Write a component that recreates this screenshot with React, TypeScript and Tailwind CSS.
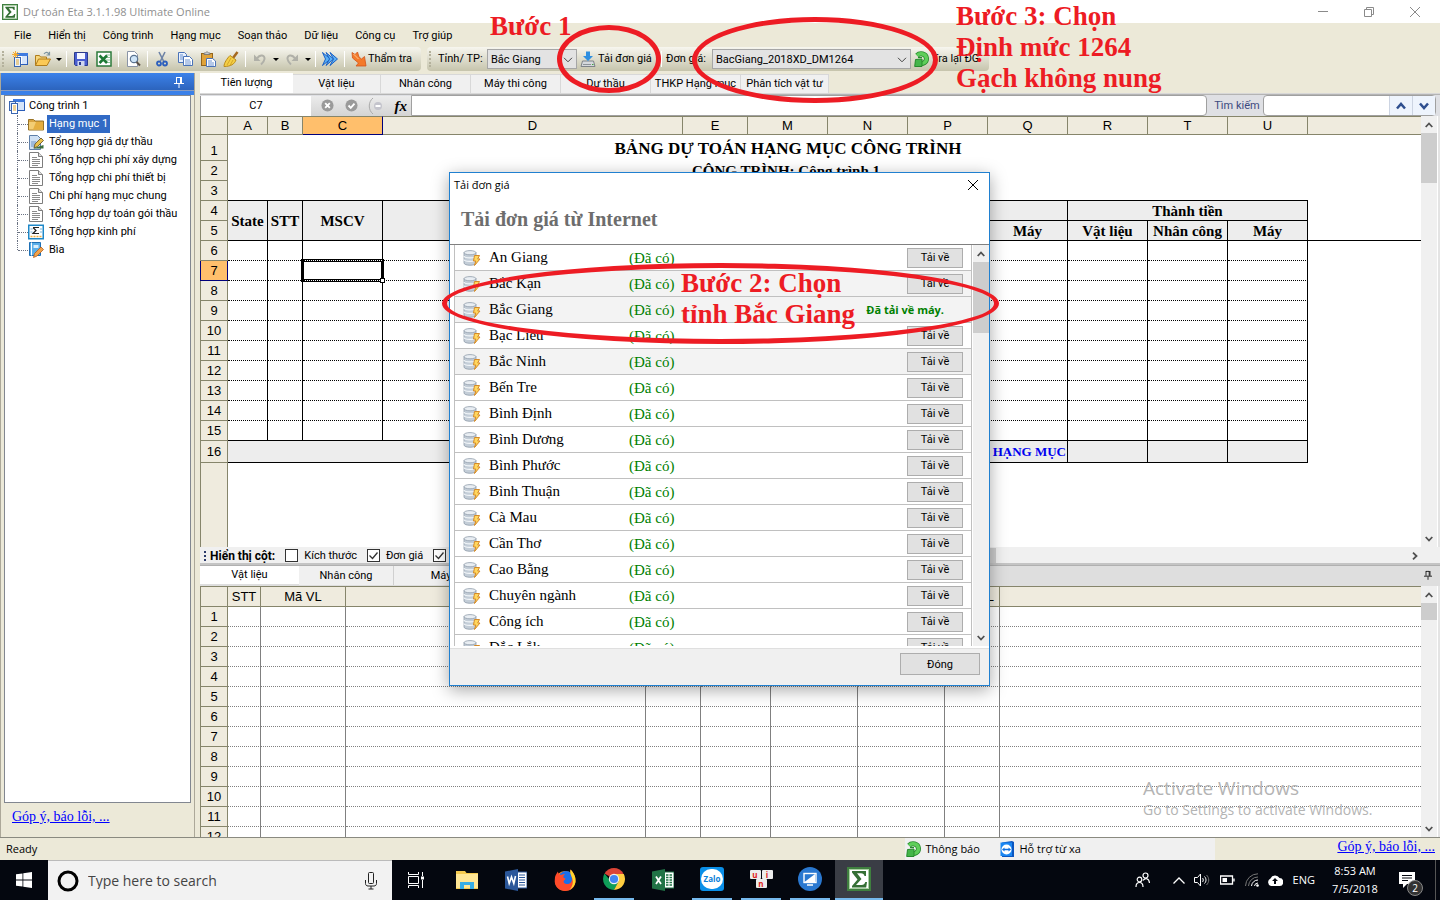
import React, { ReactNode } from "react";

const provinces = [
  { name: "An Giang" },
  { name: "Bắc Kạn", shaded: true },
  { name: "Bắc Giang", shaded: true, done: true },
  { name: "Bạc Liêu" },
  { name: "Bắc Ninh", shaded: true },
  { name: "Bến Tre" },
  { name: "Bình Định" },
  { name: "Bình Dương" },
  { name: "Bình Phước" },
  { name: "Bình Thuận" },
  { name: "Cà Mau" },
  { name: "Cần Thơ" },
  { name: "Cao Bằng" },
  { name: "Chuyên ngành" },
  { name: "Công ích" },
  { name: "Đắc Lắk" },
];

const menus = [
  "File",
  "Hiển thị",
  "Công trình",
  "Hạng mục",
  "Soạn thảo",
  "Dữ liệu",
  "Công cụ",
  "Trợ giúp",
];

const tabs = [
  { label: "Vật liệu", width: "w-[88px]" },
  { label: "Nhân công", width: "w-[90px]" },
  { label: "Máy thi công", width: "w-[90px]" },
  { label: "Dự thầu", width: "w-[90px]" },
  { label: "THKP Hạng mục", width: "w-[90px]" },
  { label: "Phân tích vật tư", width: "w-[88px]" },
];

const bodyRows = [6, 7, 8, 9, 10, 11, 12, 13, 14, 15];
const bodyCols = ["A", "B", "C", "D", "E", "M", "N", "P", "Q", "R", "T", "U"];
const detailRows = [1, 2, 3, 4, 5, 6, 7, 8, 9, 10, 11, 12];

/* ---------- icons ---------- */

const SigmaIcon = ({ className }: { className: string }) => (
  <svg viewBox="0 0 24 24" className={className}>
    <rect x="1" y="1" width="22" height="22" fill="#fff" stroke="#3f7f3f" strokeWidth="2" />
    <rect x="2.500" y="2.500" width="19" height="19" fill="none" stroke="#a9cfa2" />
    <path d="M5 4h14v5h-1.500c-.5-2-1.500-2.800-3.500-2.800h-4L14.500 12 9 18h5.500c2.200 0 3.200-1 3.800-3H20l-.8 5.500H5V19l5.500-6.500L5 5.500z" fill="#356f35" />
  </svg>
);

const NewIcon = () => (
  <svg viewBox="0 0 16 16" className="size-4">
    <rect x="5.500" y="2.500" width="10" height="11" fill="#fff" stroke="#2a5db8" />
    <path d="M5 2h11v3H5z" fill="#3f7be0" />
    <path d="M10 5v8h5V5z" fill="#d6e5fb" />
    <rect x="2.500" y="6.500" width="6" height="9" fill="#eaf2ff" stroke="#3a66b0" />
    <path d="M4 9h3M4 11h3M4 13h3" stroke="#e2a92f" />
    <path d="M3.500 0v7M0 3.500h7M1 1l5 5M6 1L1 6" stroke="#f5a623" strokeWidth=".9" />
  </svg>
);

const ProjectIcon = () => (
  <svg viewBox="0 0 16 16" className="size-4">
    <rect x="4.500" y="1.500" width="11" height="11" fill="#fff" stroke="#2a5db8" />
    <path d="M4 1h12v3H4z" fill="#3f7be0" />
    <path d="M9 4v8h6V4z" fill="#d6e5fb" />
    <rect x=".5" y="3.500" width="6" height="9" fill="#dbe8fb" stroke="#3a66b0" />
    <rect x="2.500" y="5.500" width="6" height="10" fill="#fff" stroke="#3a66b0" />
    <path d="M4 8h3M4 10h3M4 12h3" stroke="#e2a92f" />
  </svg>
);

const OpenIcon = () => (
  <svg viewBox="0 0 16 16" className="size-4">
    <path d="M.5 14.500V4.500h4l1 1.500h6v2" fill="#f7d77c" stroke="#b07d1c" />
    <path d="M.5 14.500l3-6.500h12l-3.500 6.500z" fill="#fbc956" stroke="#b07d1c" />
    <path d="M9 3c2-2.500 4-2 5 .5M14.500.8V4h-3" fill="none" stroke="#7b93a0" strokeWidth="1.200" />
  </svg>
);

const SaveIcon = () => (
  <svg viewBox="0 0 16 16" className="size-4">
    <path d="M1.500 1.500h13v13h-12l-1-1z" fill="#4a5fd0" stroke="#2b3a8c" />
    <rect x="4" y="2" width="8" height="6" fill="#f4f6ff" />
    <rect x="4.500" y="10" width="7" height="5" fill="#cfd6ee" />
    <rect x="6" y="11" width="2" height="3" fill="#2b3a8c" />
  </svg>
);

const SheetIcon = () => (
  <svg viewBox="0 0 16 16" className="size-4">
    <rect x="1" y="1" width="14" height="14" fill="#fff" stroke="#2b7a3a" strokeWidth="1.500" />
    <path d="M10 4h4M10 6.500h4M10 9h4M10 11.500h4" stroke="#8cc497" />
    <path d="M3.500 4.500l7.500 7.500M11 4.500L3.500 12" stroke="#1d7a35" strokeWidth="2.600" />
  </svg>
);

const PreviewIcon = () => (
  <svg viewBox="0 0 16 16" className="size-4">
    <path d="M2.500.5h7l3 3v12h-10z" fill="#fff" stroke="#8a94a6" />
    <circle cx="9" cy="8" r="3.700" fill="#cfe5f8" stroke="#5b7390" strokeWidth="1.200" />
    <path d="M11.500 11l3.500 3.500" stroke="#5a5048" strokeWidth="2" />
  </svg>
);

const CutIcon = () => (
  <svg viewBox="0 0 16 16" className="size-4">
    <path d="M5 1l4.500 9M11 1L6.500 10" stroke="#6d83a6" strokeWidth="1.600" />
    <circle cx="5" cy="12.500" r="2" fill="none" stroke="#2c5fbd" strokeWidth="1.800" />
    <circle cx="11" cy="12.500" r="2" fill="none" stroke="#2c5fbd" strokeWidth="1.800" />
  </svg>
);

const CopyIcon = () => (
  <svg viewBox="0 0 16 16" className="size-4">
    <path d="M1.500 1.500h6l2 2v8h-8z" fill="#e9f1fd" stroke="#4a73b8" />
    <path d="M6.500 5.500h6l3 3v6h-9z" fill="#fff" stroke="#4a73b8" />
    <path d="M3 4h3M3 6h3M3 8h3M8 9h5M8 11h6M8 13h6" stroke="#6d93d2" />
  </svg>
);

const PasteIcon = () => (
  <svg viewBox="0 0 16 16" className="size-4">
    <rect x="1.500" y="2.500" width="11" height="12" fill="#e0a33a" stroke="#94651a" />
    <path d="M4 3.500h6V2H8.500L7 .5 5.500 2H4z" fill="#c8ccd2" stroke="#6e6e6e" strokeWidth=".8" />
    <path d="M6.500 7.500h6l3 2.500v5.500h-9z" fill="#fff" stroke="#4a73b8" />
    <path d="M8 10h4M8 12h6M8 14h6" stroke="#6d93d2" />
  </svg>
);

const BroomIcon = () => (
  <svg viewBox="0 0 16 16" className="size-4">
    <path d="M14.500 1L10 7" stroke="#a5681e" strokeWidth="2.500" />
    <path d="M7 4.500l6 4.500C11.500 13 8 15.500 1 15.500 1 12 4 7.500 7 4.500z" fill="#f5cf45" stroke="#b98a1a" />
    <path d="M8 7l-4 7M10 9l-3 5.500" stroke="#c99a22" strokeWidth=".8" />
  </svg>
);

const UndoIcon = ({ flip }: { flip?: boolean }) => (
  <svg viewBox="0 0 16 16" className={flip ? "size-4 -scale-x-100" : "size-4"}>
    <path d="M5 7.500C8 3 13 4 12.500 8c-.3 2.500-2 4-3.500 5.500" fill="none" stroke="#b0b0a8" strokeWidth="2" />
    <path d="M2 3.500v6.500h6.500z" fill="#b0b0a8" />
  </svg>
);

const ForwardIcon = () => (
  <svg viewBox="0 0 18 16" className="h-4 w-[18px]">
    <path d="M1.500 1.500L9.500 8l-8 6.500L4.500 8z" fill="#5ab0f5" stroke="#1a5fc4" />
    <path d="M5 1.500L12.500 8 5 14.500 8.500 8z" fill="#5ab0f5" stroke="#1a5fc4" />
    <path d="M9 1.500L16.500 8 9 14.500 12.500 8z" fill="#5ab0f5" stroke="#1a5fc4" />
  </svg>
);

const CheckArrowIcon = () => (
  <svg viewBox="0 0 16 16" className="size-4">
    <path d="M1 1.500l3 2L6.500 1l1.500 5 2.500 2 3-2.500 1.500 9.500H5L7.500 12 1.500 7z" fill="#f47a2a" stroke="#d2541a" strokeWidth=".8" />
    <path d="M2.500 3l5 5" stroke="#ffc48a" />
  </svg>
);

const DownloadIcon = () => (
  <svg viewBox="0 0 16 16" className="size-4">
    <path d="M2.500 10h11l1.500 5.500H1z" fill="#d5d8dc" stroke="#7d8288" />
    <path d="M6 .5h4V5h3L8 10 3 5h3z" fill="#2f8fe0" />
    <path d="M3 13.500h8" stroke="#8d9298" />
    <path d="M12 13.500h1.500" stroke="#3aa53a" />
  </svg>
);

const RefreshIcon = () => (
  <svg viewBox="0 0 16 16" className="size-4">
    <path d="M3 4.500C6 1.500 12 2.500 12.500 7.500c0 4-3.500 5.500-6.500 4.800" fill="none" stroke="#268a2c" strokeWidth="5" />
    <path d="M3 4.500C6 1.500 12 2.500 12.500 7.500c0 4-3.500 5.500-6.500 4.800" fill="none" stroke="#5fce5a" strokeWidth="3.400" />
    <path d="M8 8L1.500 8.500l-.8 7H8z" fill="#44b549" stroke="#268a2c" />
    <path d="M4 6.500h4" stroke="#268a2c" strokeWidth="1.200" />
  </svg>
);

const RemoteIcon = () => (
  <svg viewBox="0 0 16 16" className="size-4">
    <path d="M3 1.500L13 0l2 1v15H3z" fill="#0a55c0" />
    <path d="M1.500 1.500H13V15H1.500z" fill="#1a86f2" />
    <circle cx="7.500" cy="8.500" r="5" fill="#fff" />
    <path d="M3 8.500l2.500-2v1.200h4V6.500l2.500 2-2.500 2V9.300h-4v1.200z" fill="#0f6fe0" />
  </svg>
);

const PinIcon = ({ className }: { className: string }) => (
  <svg viewBox="0 0 10 12" className={className} fill="none" stroke="currentColor">
    <path d="M2.500 1v6M2.500 1.500h4M6.500 1v6M7.500 1v6M0 7.500h10M5 8v4" />
  </svg>
);

const FolderIcon = () => (
  <svg viewBox="0 0 16 16" className="size-4">
    <path d="M.5 3.500h5l1.500 1.500h8.500v9H.5z" fill="#d9a441" stroke="#9a7426" />
    <path d="M1 6h14v7.500H1z" fill="#f3cd74" />
    <path d="M8 6h7v7.500H5z" fill="#e5ae3f" />
  </svg>
);

const PageIcon = () => (
  <svg viewBox="0 0 16 16" className="size-4">
    <path d="M1.500.5h9l4 4v11h-13z" fill="#fff" stroke="#7d7d7d" />
    <path d="M10.500.5v4h4" fill="#ddd" stroke="#7d7d7d" />
    <path d="M4 5.500h5M4 7.500h8M4 9.500h8M4 11.500h8M4 13.500h6" stroke="#8a8a8a" />
  </svg>
);

const BidIcon = () => (
  <svg viewBox="0 0 16 16" className="size-4">
    <path d="M1.500 1.500h8l3 3v11h-11z" fill="#cfe0f4" stroke="#5f7fa8" />
    <path d="M3 8h5M3 10h4M3 12h4" stroke="#6d93c2" />
    <path d="M6 14l1-4 6-6 2.500 2.500-6 6z" fill="#e9c14c" stroke="#5c4a22" strokeWidth=".8" />
    <path d="M5 14.500h10.500v-3.500z" fill="#3c6e3c" />
  </svg>
);

const CostIcon = () => (
  <svg viewBox="0 0 16 16" className="size-4">
    <rect x=".75" y="1.250" width="14.500" height="13.500" fill="#fff" stroke="#1e88c8" strokeWidth="1.500" />
    <path d="M5 3.500h6M5 3.500L8 6.500 5 9.500h6" fill="none" stroke="#222" strokeWidth="1.200" />
    <path d="M2.500 5h2M12 5h2M2.500 8h2M12 8h2" stroke="#7ab5dc" />
    <path d="M2.500 12.500h11" stroke="#f0b040" strokeWidth="1.500" strokeDasharray="2 1" />
  </svg>
);

const CoverIcon = () => (
  <svg viewBox="0 0 16 16" className="size-4">
    <path d="M1.500.5h11v13h-11z" fill="#5aaee8" stroke="#1e6fb4" />
    <path d="M3.500.5v13" stroke="#fff" />
    <path d="M5.500 3h5v3h-5z" fill="#d8eefc" />
    <path d="M5.500 15.500l1-4L13 5l2.500 2.500-6.500 6.500z" fill="#f2a24a" stroke="#b4601e" strokeWidth=".8" />
  </svg>
);

const DatabaseIcon = () => (
  <svg viewBox="0 0 18 16" className="h-4 w-[18px]">
    <path d="M1 2.500v10.500c0 3 12 3 12 0V2.500z" fill="#c3cdd7" stroke="#8f9ca9" strokeWidth=".8" />
    <ellipse cx="7" cy="2.700" rx="6" ry="2.100" fill="#e9eef3" stroke="#8f9ca9" strokeWidth=".8" />
    <path d="M1 6c0 2.500 12 2.500 12 0M1 9.500c0 2.500 12 2.500 12 0" fill="none" stroke="#f4f7fa" strokeWidth="1.200" />
    <path d="M11.500 5.500h5l-1.800 3.500h2.300l-5.500 6.500 1.300-4.500h-2.300z" fill="#ffd75e" stroke="#d68a26" strokeWidth="1" />
  </svg>
);

const Chevron = ({ className }: { className: string }) => (
  <svg viewBox="0 0 10 6" className={className} fill="none" stroke="currentColor">
    <path d="M1 .8l4 4 4-4" />
  </svg>
);

const CloseIcon = ({ className }: { className: string }) => (
  <svg viewBox="0 0 12 12" className={className} stroke="currentColor">
    <path d="M1 1l10 10M11 1L1 11" />
  </svg>
);

/* ---------- small parts ---------- */

const ToolButton = ({ label, children }: { label: string; children: ReactNode }) => (
  <button aria-label={label} className="flex h-5 w-[23px] shrink-0 items-center justify-center">
    {children}
  </button>
);

const Caret = () => (
  <button aria-label="Thêm" className="flex h-5 w-[9px] shrink-0 items-center justify-center">
    <svg viewBox="0 0 6 3" className="h-[3px] w-1.5">
      <path d="M0 0h6L3 3z" />
    </svg>
  </button>
);

const Separator = () => (
  <div className="flex w-1.5 shrink-0 justify-center">
    <div className="h-4 w-px bg-white" />
  </div>
);

const Grip = () => (
  <div className="mx-0.5 h-4 w-1 shrink-0 border-l-2 border-dotted border-[#b4b19c]" />
);

const ScrollArrow = ({ label, dir }: { label: string; dir: "up" | "down" }) => (
  <button
    aria-label={label}
    className="flex h-[17px] shrink-0 items-center justify-center text-[#505050]"
  >
    <svg
      viewBox="0 0 8 6"
      className={dir === "up" ? "h-1.5 w-2" : "h-1.5 w-2 rotate-180"}
      fill="none"
      stroke="currentColor"
      strokeWidth="1.800"
    >
      <path d="M.7 5L4 1.500 7.300 5" />
    </svg>
  </button>
);

const Scrollbar = ({ thumb }: { thumb: string }) => (
  <div className="flex w-4 shrink-0 flex-col bg-[#f0f0f0]">
    <ScrollArrow label="Cuộn lên" dir="up" />
    <div className={"w-full bg-[#cdcdcd] " + thumb} />
    <div className="flex-1" />
    <ScrollArrow label="Cuộn xuống" dir="down" />
  </div>
);

const ColumnCheck = ({ id, label, checked }: { id: string; label?: string; checked?: boolean }) => (
  <div className="flex shrink-0 items-center gap-1.5">
    <span className="relative flex size-[13px]">
      <input
        id={id}
        type="checkbox"
        aria-label={label ? undefined : id}
        defaultChecked={checked}
        className="peer size-[13px] appearance-none border border-[#333] bg-white"
      />
      <svg
        viewBox="0 0 13 13"
        className="pointer-events-none absolute inset-0 hidden peer-checked:block"
        fill="none"
        stroke="#333"
        strokeWidth="1.300"
      >
        <path d="M2.500 6.500l3 3 5-6" />
      </svg>
    </span>
    {label && <label htmlFor={id}>{label}</label>}
  </div>
);

/* ---------- window top ---------- */

const TitleBar = () => (
  <header className="flex h-[23px] shrink-0 items-center bg-white pl-0.5">
    <SigmaIcon className="size-4" />
    <h1 className="ml-[5px] font-['Open_Sans',sans-serif] text-[11px] text-[#8f8f8f]">
      Dự toán Eta 3.1.1.98 Ultimate Online
    </h1>
    <div className="ml-auto flex pr-0.5 text-[#8a8a8a]">
      <button aria-label="Thu nhỏ" className="flex h-5 w-[46px] items-center justify-center">
        <span className="h-px w-2.5 bg-current" />
      </button>
      <button aria-label="Khôi phục" className="flex h-5 w-[46px] items-center justify-center">
        <svg viewBox="0 0 10 10" className="size-2.5" fill="none" stroke="currentColor">
          <path d="M.5 2.500h7v7h-7zM2.500 2.500v-2h7v7h-2" />
        </svg>
      </button>
      <button aria-label="Đóng cửa sổ" className="flex h-5 w-[46px] items-center justify-center">
        <CloseIcon className="size-3" />
      </button>
    </div>
  </header>
);

const Toolbar = () => (
  <div className="flex h-[25px] shrink-0 gap-1.5">
    <div className="flex h-6 w-[421px] items-center rounded-r bg-linear-to-b from-[#f7f6ef] to-[#c6c4ac]">
      <Grip />
      <ToolButton label="Tạo mới"><NewIcon /></ToolButton>
      <ToolButton label="Mở"><OpenIcon /></ToolButton>
      <Caret />
      <Separator />
      <ToolButton label="Lưu"><SaveIcon /></ToolButton>
      <ToolButton label="Xuất Excel"><SheetIcon /></ToolButton>
      <Separator />
      <ToolButton label="Xem trước"><PreviewIcon /></ToolButton>
      <Separator />
      <ToolButton label="Cắt"><CutIcon /></ToolButton>
      <ToolButton label="Sao chép"><CopyIcon /></ToolButton>
      <ToolButton label="Dán"><PasteIcon /></ToolButton>
      <ToolButton label="Xóa định dạng"><BroomIcon /></ToolButton>
      <Separator />
      <ToolButton label="Hoàn tác"><UndoIcon /></ToolButton>
      <Caret />
      <ToolButton label="Làm lại"><UndoIcon flip /></ToolButton>
      <Caret />
      <Separator />
      <ToolButton label="Tiếp"><ForwardIcon /></ToolButton>
      <Separator />
      <button className="ml-1 flex shrink-0 items-center gap-px">
        <CheckArrowIcon />
        Thẩm tra
      </button>
    </div>
    <div className="flex h-6 w-[562px] items-center rounded bg-linear-to-b from-[#f7f6ef] to-[#c6c4ac]">
      <Grip />
      <label htmlFor="province" className="w-[52px] shrink-0 pl-[3px] whitespace-nowrap">
        Tỉnh/ TP:
      </label>
      <div className="relative shrink-0">
        <select
          id="province"
          className="h-5 w-[90px] appearance-none border border-[#a6a6a6] bg-[#e3e3e3] pt-0.5 pl-[3px]"
        >
          <option>Bắc Giang</option>
        </select>
        <Chevron className="pointer-events-none absolute top-2 right-1 h-1.5 w-2.5 text-[#444]" />
      </div>
      <button className="ml-[3px] flex w-[78px] shrink-0 items-center gap-0.5 whitespace-nowrap">
        <DownloadIcon />
        Tải đơn giá
      </button>
      <Separator />
      <label htmlFor="price" className="w-[48px] shrink-0 pl-0.5 whitespace-nowrap">
        Đơn giá:
      </label>
      <div className="relative shrink-0">
        <select
          id="price"
          className="h-5 w-[199px] appearance-none border border-[#a6a6a6] bg-[#e3e3e3] pt-0.5 pl-[3px]"
        >
          <option>BacGiang_2018XD_DM1264</option>
        </select>
        <Chevron className="pointer-events-none absolute top-2 right-1 h-1.5 w-2.5 text-[#444]" />
      </div>
      <button className="ml-[3px] flex shrink-0 items-center gap-0.5 whitespace-nowrap">
        <RefreshIcon />
        Tra lại ĐG
      </button>
    </div>
  </div>
);

/* ---------- left side ---------- */

const treeItems = [
  { label: "Hạng mục 1", icon: <FolderIcon />, selected: true },
  { label: "Tổng hợp giá dự thầu", icon: <BidIcon /> },
  { label: "Tổng hợp chi phí xây dựng", icon: <PageIcon /> },
  { label: "Tổng hợp chi phí thiết bị", icon: <PageIcon /> },
  { label: "Chi phí hạng mục chung", icon: <PageIcon /> },
  { label: "Tổng hợp dự toán gói thầu", icon: <PageIcon /> },
  { label: "Tổng hợp kinh phí", icon: <CostIcon /> },
  { label: "Bìa", icon: <CoverIcon /> },
];

const Sidebar = () => (
  <aside className="flex w-[195px] shrink-0 flex-col border-x border-[#aca899]">
    <div className="flex h-[18px] shrink-0 items-center justify-end border-b border-[#8a9cc0] bg-linear-to-b from-[#3c82ea] to-[#2c64bd] pr-2.5 text-white">
      <PinIcon className="h-3 w-2.5" />
    </div>
    <div className="h-1 shrink-0 bg-[#3a80e8]" />
    <div className="mx-[3px] flex-1 border border-[#828790] bg-white pt-px pl-1">
      <div className="flex h-[18px] items-center gap-1">
        <ProjectIcon />
        Công trình 1
      </div>
      <ul className="ml-2">
        {treeItems.map((item, i) => (
          <li key={item.label} className="flex h-[18px] items-center">
            <span
              className={
                i === treeItems.length - 1
                  ? "h-[9px] self-start border-l border-dotted border-gray-500"
                  : "h-[18px] border-l border-dotted border-gray-500"
              }
            />
            <span className="w-2.5 border-t border-dotted border-gray-500" />
            {item.icon}
            <span
              className={
                item.selected
                  ? "ml-[3px] bg-[#316ac5] px-0.5 leading-[18px] text-white"
                  : "ml-[3px] px-0.5 leading-[18px]"
              }
            >
              {item.label}
            </span>
          </li>
        ))}
      </ul>
    </div>
    <div className="h-[34px] shrink-0 pt-1.5 pl-[11px]">
      <a href="#feedback" className="font-['Liberation_Serif',serif] text-[14px] text-[#0000ff] underline">
        Góp ý, báo lỗi, ...
      </a>
    </div>
  </aside>
);

/* ---------- estimate sheet ---------- */

const rowHead =
  "border-x border-b border-[#86856b] bg-[#efebde] p-0 text-center font-['Liberation_Sans',sans-serif] text-[13px] font-normal";
const activeHead = "border-[#00007b] bg-[#ffbf6c]";
const groupHead = "border-r border-b border-black bg-[#ededed] p-0 text-[15px]";

const EstimateSheet = () => (
  <table className="w-full table-fixed border-separate border-spacing-0 leading-4">
    <colgroup>
      <col className="w-[28px]" />
      <col className="w-[40px]" />
      <col className="w-[35px]" />
      <col className="w-[80px]" />
      <col className="w-[300px]" />
      <col className="w-[65px]" />
      <col className="w-[80px]" />
      <col className="w-[80px]" />
      <col className="w-[80px]" />
      <col className="w-[80px]" />
      <col className="w-[80px]" />
      <col className="w-[80px]" />
      <col className="w-[80px]" />
      <col />
    </colgroup>
    <thead>
      <tr className="h-[19px] font-['Liberation_Sans',sans-serif] text-[13px]">
        <th className="border border-[#86856b] bg-[#efebde] p-0" />
        {bodyCols.map((col) => (
          <th
            key={col}
            className={
              "border-t border-r border-b p-0 font-normal " +
              (col === "C" ? activeHead + " border-t-[#86856b]" : "border-[#86856b] bg-[#efebde]")
            }
          >
            {col}
          </th>
        ))}
        <th className="border-y border-[#86856b] bg-[#efebde] p-0" />
      </tr>
    </thead>
    <tbody className="font-['Liberation_Serif',serif]">
      <tr className="h-[26px]">
        <th className={rowHead + " pt-1.5"}>1</th>
        <td colSpan={12} className="p-0 pt-0.5 pl-10 text-center text-[17px] font-bold">
          BẢNG DỰ TOÁN HẠNG MỤC CÔNG TRÌNH
        </td>
        <td />
      </tr>
      <tr className="h-5">
        <th className={rowHead}>2</th>
        <td colSpan={12} className="p-0 pl-9 text-center text-[15px] font-bold">
          CÔNG TRÌNH: Công trình 1
        </td>
        <td />
      </tr>
      <tr className="h-5">
        <th className={rowHead}>3</th>
        <td colSpan={12} className="border-b border-black p-0" />
        <td />
      </tr>
      <tr className="h-5">
        <th className={rowHead}>4</th>
        <th rowSpan={2} className={groupHead}>State</th>
        <th rowSpan={2} className={groupHead}>STT</th>
        <th rowSpan={2} className={groupHead}>MSCV</th>
        <th rowSpan={2} className={groupHead} />
        <th rowSpan={2} className={groupHead} />
        <th rowSpan={2} className={groupHead} />
        <th colSpan={3} className={groupHead} />
        <th colSpan={3} className={groupHead}>Thành tiền</th>
        <td />
      </tr>
      <tr className="h-5">
        <th className={rowHead}>5</th>
        <th className={groupHead} />
        <th className={groupHead} />
        <th className={groupHead}>Máy</th>
        <th className={groupHead}>Vật liệu</th>
        <th className={groupHead}>Nhân công</th>
        <th className={groupHead}>Máy</th>
        <td className="border-b border-black" />
      </tr>
      {bodyRows.map((row) => (
        <tr key={row} className="h-5">
          <th
            className={
              "border-x border-b p-0 text-center font-['Liberation_Sans',sans-serif] text-[13px] font-normal " +
              (row === 7 ? activeHead : "border-[#86856b] bg-[#efebde]")
            }
          >
            {row}
          </th>
          {bodyCols.map((col) => (
            <td
              key={col}
              className={
                row === 15
                  ? "border-r border-b border-black p-0"
                  : "relative border-r border-b border-black p-0 [border-bottom-style:dotted]"
              }
            >
              {row === 7 && col === "C" && (
                <span className="absolute -inset-x-0.5 -inset-y-0.5 z-10 border-[3px] border-double border-black">
                  <span className="absolute -right-1 -bottom-1 size-[5px] border border-black bg-white" />
                </span>
              )}
            </td>
          ))}
          <td />
        </tr>
      ))}
      <tr className="h-[22px]">
        <th className={rowHead}>16</th>
        <td colSpan={9} className="border-r border-b border-black bg-[#ededed] p-0 pr-px text-right text-[13px] font-bold text-[#0000f0]">
          HẠNG MỤC
        </td>
        <td className={groupHead} />
        <td className={groupHead} />
        <td className={groupHead} />
        <td />
      </tr>
      <tr className="h-40">
        <th className={rowHead} />
        <td colSpan={13} />
      </tr>
    </tbody>
  </table>
);

const detailHead = "border-y border-r border-[#86856b] bg-[#efebde] p-0 font-normal";
const detailCols = ["STT", "Mã VL", "name", "unit", "ratio", "norm", "base", "price"];

const DetailSheet = () => (
  <table className="w-full table-fixed border-separate border-spacing-0 font-['Liberation_Sans',sans-serif] text-[13px] leading-4">
    <colgroup>
      <col className="w-[28px]" />
      <col className="w-[33px]" />
      <col className="w-[85px]" />
      <col className="w-[300px]" />
      <col className="w-[55px]" />
      <col className="w-[70px]" />
      <col className="w-[87px]" />
      <col className="w-[87px]" />
      <col className="w-[55px]" />
      <col />
    </colgroup>
    <thead>
      <tr className="h-[21px]">
        <th className="border border-[#86856b] bg-[#efebde] p-0" />
        <th className={detailHead}>STT</th>
        <th className={detailHead}>Mã VL</th>
        <th className={detailHead} />
        <th className={detailHead} />
        <th className={detailHead} />
        <th className={detailHead} />
        <th className={detailHead} />
        <th className={detailHead + " pr-[5px] text-right"}>VL</th>
        <th className="border-y border-[#86856b] bg-[#efebde] p-0" />
      </tr>
    </thead>
    <tbody>
      {detailRows.map((row) => (
        <tr key={row} className="h-5">
          <th className={rowHead}>{row}</th>
          {detailCols.map((col) => (
            <td
              key={col}
              className="border-r border-b border-[#808080] p-0 [border-bottom-style:dotted]"
            />
          ))}
          <td className="border-b border-dotted border-[#808080] p-0" />
        </tr>
      ))}
    </tbody>
  </table>
);

const FormulaBar = () => (
  <div className="flex h-[22px] shrink-0 items-center border-t border-[#b4b4b4] bg-[#dfe0e4]">
    <input
      aria-label="Ô hiện tại"
      defaultValue="C7"
      className="h-5 w-[111px] border-l border-[#999] bg-white text-center"
    />
    <div className="flex h-5 w-[100px] items-center justify-between bg-linear-to-b from-[#ececec] to-[#d4d4d4] pr-1 pl-2.5">
      <svg viewBox="0 0 14 14" className="size-[13px]">
        <circle cx="7" cy="7" r="6.500" fill="#9a9a9a" />
        <path d="M4.500 4.500l5 5M9.500 4.500l-5 5" stroke="#fff" strokeWidth="2" />
      </svg>
      <svg viewBox="0 0 14 14" className="size-[13px]">
        <circle cx="7" cy="7" r="6.500" fill="#9a9a9a" />
        <path d="M3.800 7l2.400 2.500 4-4.500" fill="none" stroke="#fff" strokeWidth="2" />
      </svg>
      <svg viewBox="0 0 16 18" className="h-[18px] w-4">
        <path d="M5 1C0 5 0 13 5 17" fill="none" stroke="#aaa" />
        <circle cx="10" cy="9" r="4" fill="#c4c4cc" />
        <path d="M7.500 9h5" stroke="#fff" strokeWidth="2" />
      </svg>
      <span className="font-['Liberation_Serif',serif] text-[15px] font-bold italic">fx</span>
    </div>
    <input
      aria-label="Công thức"
      className="h-[21px] min-w-0 flex-1 rounded-r-sm border border-[#a0a0a0] bg-white"
    />
    <label htmlFor="find" className="w-[56px] shrink-0 pl-1 text-center text-[#3c4a80]">
      Tìm kiếm
    </label>
    <div className="mr-1 flex h-[21px] w-[173px] shrink-0 rounded-sm border border-[#a0a0a0] bg-white text-[#2f4f8f]">
      <input id="find" className="w-[125px]" />
      <button aria-label="Tìm trước" className="flex w-[23px] items-center justify-center border-l border-[#ccd4e2] bg-[#eef4fd]">
        <svg viewBox="0 0 10 8" className="h-2 w-2.5" fill="none" stroke="currentColor" strokeWidth="2.500">
          <path d="M1 6.500l4-4.500 4 4.500" />
        </svg>
      </button>
      <button aria-label="Tìm tiếp" className="flex w-[23px] items-center justify-center border-l border-[#ccd4e2] bg-[#eef4fd]">
        <svg viewBox="0 0 10 8" className="h-2 w-2.5" fill="none" stroke="currentColor" strokeWidth="2.500">
          <path d="M1 1.500L5 6l4-4.500" />
        </svg>
      </button>
    </div>
  </div>
);

const Workspace = () => (
  <main className="flex min-w-0 flex-1 flex-col">
    <div className="flex h-[21px] shrink-0 items-end border-b border-[#d8d8d8]">
      <button className="h-5 w-[93px] shrink-0 bg-white">Tiên lượng</button>
      {tabs.map((tab) => (
        <button
          key={tab.label}
          className={
            "h-[19px] shrink-0 border-t border-r border-[#d8d8d8] bg-[#f0f0f0] whitespace-nowrap " +
            tab.width
          }
        >
          {tab.label}
        </button>
      ))}
    </div>
    <FormulaBar />
    <div className="flex min-h-0 flex-1">
      <div className="min-w-0 flex-1 overflow-hidden bg-white">
        <EstimateSheet />
      </div>
      <Scrollbar thumb="h-[50px]" />
      <div className="w-[3px] border-l border-white bg-[#e4e4e4]" />
    </div>

    <div className="flex h-4 shrink-0 items-center gap-2.5 bg-[#f0f0f0] pt-px pl-1">
      <div className="-mr-1.5 h-2.5 border-l-2 border-dotted border-[#2a3a6a]" />
      <b className="text-[12px]">Hiển thị cột:</b>
      <ColumnCheck id="size" label="Kích thước" />
      <ColumnCheck id="unit" label="Đơn giá" checked />
      <ColumnCheck id="total" checked />
      <div className="flex h-4 flex-1 items-center pr-[22px]">
        <div className="h-full w-[540px] bg-[#cdcdcd]" />
        <button aria-label="Cuộn phải" className="ml-auto text-[#505050]">
          <svg viewBox="0 0 6 8" className="h-2 w-1.5" fill="none" stroke="currentColor" strokeWidth="1.800">
            <path d="M1 .7L4.500 4 1 7.300" />
          </svg>
        </button>
      </div>
    </div>
    <div className="h-0.5 shrink-0 bg-[#c4c4c4]" />
    <div className="flex h-[21px] shrink-0 items-start border-t border-[#b0b0b0] bg-[#dedede]">
      <button className="h-[18px] w-[99px] shrink-0 bg-white">Vật liệu</button>
      <button className="h-[19px] w-[95px] shrink-0 border-r border-[#d0d0d0] bg-[#f0f0f0]">Nhân công</button>
      <button className="h-[19px] w-[95px] shrink-0 border-r border-[#d0d0d0] bg-[#f0f0f0]">Máy</button>
      <PinIcon className="mt-1 mr-2 ml-auto h-2.5 w-2" />
    </div>
    <div className="flex h-[251px] shrink-0">
      <div className="min-w-0 flex-1 overflow-hidden bg-white">
        <DetailSheet />
      </div>
      <Scrollbar thumb="h-[17px]" />
      <div className="w-[3px] border-l border-white bg-[#e4e4e4]" />
    </div>
  </main>
);

/* ---------- dialog ---------- */

const DownloadDialog = () => (
  <section
    role="dialog"
    aria-label="Tải đơn giá"
    className="absolute top-[172px] left-[449px] flex w-[541px] flex-col border border-[#2080d0] bg-white shadow-[0_4px_16px_rgba(0,0,0,0.35)]"
  >
    <div className="flex h-6 items-center justify-between pr-2.5 pl-1">
      <span className="font-['Open_Sans',sans-serif] text-[11px]">Tải đơn giá</span>
      <button aria-label="Đóng hộp thoại">
        <CloseIcon className="size-3" />
      </button>
    </div>
    <h2 className="h-12 border-b border-[#808080] pt-2 pl-[11px] font-['Liberation_Serif',serif] text-[20px] leading-7 font-bold text-[#6d6d6d]">
      Tải đơn giá từ Internet
    </h2>
    <div className="flex h-[401px] pl-1">
      <ul className="flex-1 overflow-hidden border-x border-[#c0c0c0]">
        {provinces.map((p) => (
          <li
            key={p.name}
            className={
              "flex h-[26px] items-center border-b border-[#c0c0c0] pl-2 font-['Liberation_Serif',serif] text-[15px] " +
              (p.shaded ? "bg-[#f3f3f3]" : "bg-white")
            }
          >
            <DatabaseIcon />
            <span className="ml-2 w-[140px] pb-0.5">{p.name}</span>
            <span className="text-[#008000]">(Đã có)</span>
            {p.done ? (
              <b className="mr-[27px] ml-auto font-['Open_Sans',sans-serif] text-[11px] text-[#008000]">
                Đã tải về máy.
              </b>
            ) : (
              <button className="mr-2 ml-auto h-5 w-14 border border-[#adadad] bg-[#e1e1e1] pt-px font-['Roboto',sans-serif] text-[11px]">
                Tải về
              </button>
            )}
          </li>
        ))}
      </ul>
      <div className="flex pl-px">
        <Scrollbar thumb="h-[71px]" />
      </div>
    </div>
    <div className="mt-0.5 flex h-[37px] items-start justify-end border-t border-[#dfdfdf] bg-[#f0f0f0] pt-1 pr-[9px]">
      <button className="h-[22px] w-20 border border-[#adadad] bg-[#e1e1e1] pt-px">Đóng</button>
    </div>
  </section>
);

/* ---------- step notes drawn over the window ---------- */

const noteText =
  "pointer-events-none absolute font-['Liberation_Serif',serif] text-[27px] leading-[31px] font-bold whitespace-nowrap text-[#ed1c24]";
const noteRing = "pointer-events-none absolute rounded-[50%] border-5 border-[#ed1c24]";

const StepNotes = () => (
  <>
    <div className={noteRing + " top-[25px] left-[557px] h-[68px] w-[104px]"} />
    <div className={noteRing + " top-[17px] left-[692px] h-[86px] w-[246px]"} />
    <div className={noteRing + " top-[263px] left-[442px] h-[81px] w-[557px]"} />
    <p className={noteText + " top-[11px] left-[490px]"}>Bước 1</p>
    <p className={noteText + " top-[268px] left-[681px]"}>
      Bước 2: Chọn
      <br />
      tỉnh Bắc Giang
    </p>
    <p className={noteText + " top-px left-[956px]"}>
      Bước 3: Chọn
      <br />
      Định mức 1264
      <br />
      Gạch không nung
    </p>
  </>
);

/* ---------- bottom bars ---------- */

const StatusBar = () => (
  <footer className="flex h-[23px] shrink-0 items-center border-t border-[#8a8a80] pl-1.5">
    <span className="font-['Open_Sans',sans-serif]">Ready</span>
    <div className="mr-[122px] ml-auto flex h-full w-[310px] items-center bg-[#f0f0f0] pl-px font-['Open_Sans',sans-serif]">
      <button className="flex w-[93px] items-center gap-[3px]">
        <RefreshIcon />
        Thông báo
      </button>
      <button className="flex items-center gap-1">
        <RemoteIcon />
        Hỗ trợ từ xa
      </button>
    </div>
    <a
      href="#feedback"
      className="mr-[5px] self-start font-['Liberation_Serif',serif] text-[14px] leading-[18px] text-[#0000ff] underline"
    >
      Góp ý, báo lỗi, ...
    </a>
  </footer>
);

const Task = ({ label, state, children }: { label: string; state?: "open" | "active"; children: ReactNode }) => (
  <button
    aria-label={label}
    className={
      "flex h-10 w-12 shrink-0 flex-col items-center " + (state === "active" ? "bg-[#3a3d45]" : "")
    }
  >
    <span className="flex flex-1 items-center">{children}</span>
    {state && <span className={"h-0.5 bg-[#76b9ed] " + (state === "active" ? "w-full" : "w-10")} />}
  </button>
);

const Taskbar = () => (
  <nav className="flex h-10 shrink-0 items-center bg-[#04070f] font-['Open_Sans',sans-serif] text-white">
    <button aria-label="Start" className="flex h-10 w-12 shrink-0 items-center justify-center">
      <svg viewBox="0 0 16 16" className="size-4" fill="#fff">
        <path d="M0 2.300L6.500 1.400v6.200H0zM7.300 1.300L16 0v7.600H7.300zM0 8.400h6.500v6.200L0 13.700zM7.300 8.400H16V16l-8.700-1.200z" />
      </svg>
    </button>
    <div className="flex h-10 w-[344px] shrink-0 items-center border-t border-[#bbb] bg-[#f2f2f2] pl-[9px] text-black">
      <svg viewBox="0 0 22 22" className="size-[22px]" fill="none" stroke="#000" strokeWidth="3">
        <circle cx="11" cy="11" r="9" />
      </svg>
      <input
        aria-label="Type here to search"
        placeholder="Type here to search"
        className="ml-[9px] flex-1 text-[14px] outline-none placeholder:text-[#444]"
      />
      <svg viewBox="0 0 12 18" className="mr-[15px] h-[18px] w-3" fill="none" stroke="#222">
        <rect x="3.500" y=".5" width="5" height="11" rx="1" />
        <path d="M.5 8v3.500c0 1.500 1 2.500 2.500 2.500h6c1.500 0 2.500-1 2.500-2.500V8M6 14v3M3.500 17h5" />
      </svg>
    </div>
    <button aria-label="Task View" className="mr-[3px] flex h-10 w-12 shrink-0 items-center justify-center">
      <svg viewBox="0 0 18 16" className="h-4 w-[18px]" fill="none" stroke="#fff">
        <path d="M1.500 0v2.500h10V0M1.500 16v-2.500h10V16M1.500 4.500h10v7h-10zM15.500 0v4M15.500 8v8" />
        <path d="M14 4.500h3v3h-3z" fill="#fff" stroke="none" />
      </svg>
    </button>
    <div className="flex gap-px">
      <Task label="File Explorer">
        <svg viewBox="0 0 22 18" className="h-[18px] w-[22px]">
          <path d="M0 0h9l1.500 2H22v16H0z" fill="#f5ca4f" />
          <path d="M0 3h22v14H0z" fill="#ffe695" />
          <path d="M4 18v-7h14v7h-4v-4H8v4z" fill="#38ade4" />
        </svg>
      </Task>
      <Task label="Word">
        <svg viewBox="0 0 22 22" className="size-[22px]">
          <path d="M12 3h10v16H12z" fill="#fff" stroke="#2b579a" />
          <path d="M14 6h6M14 8.500h6M14 11h6M14 13.500h6M14 16h6" stroke="#2b579a" />
          <path d="M0 2.500L13 0v22L0 19.500z" fill="#2b579a" />
          <path d="M2.500 7.500l1.700 7 2.300-6.500 2.300 6.500 1.700-7.500" fill="none" stroke="#fff" strokeWidth="1.600" />
        </svg>
      </Task>
      <Task label="Firefox">
        <svg viewBox="0 0 22 22" className="size-[22px]">
          <circle cx="11" cy="12" r="10" fill="#ff8a16" />
          <circle cx="12" cy="9.500" r="7.500" fill="#1b6fe8" />
          <path d="M1 8C2 5 3 4 4 2.500c0 2 1 3 3 3.500 1.500-1 3-1 4-.5-2 1.500-2 2.500-1 3.500 2 0 2 1 0 2.500-1 1 0 3.500 3 3.500s5-2 5-5c0-4-2-5-1.500-9.500C20 4 22 8 21.500 13c-1 6-5 9-10.500 9S1 18 .7 12.500z" fill="#ff4a2a" />
          <path d="M16.500.5C20 4 22 8 21.500 13c-.5 3.500-3 6.500-6 8 3-4 4-7 3-11-.7-3-3-5-2-9.500z" fill="#ffd52e" />
        </svg>
      </Task>
      <Task label="Chrome" state="open">
        <svg viewBox="0 0 22 22" className="size-[22px]">
          <path d="M11 11L1.500 5.500A11 11 0 0 1 20.500 5.500z" fill="#db4437" />
          <path d="M11 11h-5L1.500 5.500A11 11 0 0 0 11 22l5-8.500z" fill="#0f9d58" />
          <path d="M11 6h9.800A11 11 0 0 1 11 22l4.500-8.500z" fill="#ffcd40" />
          <circle cx="11" cy="11" r="5.200" fill="#f1f1f1" />
          <circle cx="11" cy="11" r="4.100" fill="#4285f4" />
        </svg>
      </Task>
      <Task label="Excel">
        <svg viewBox="0 0 22 22" className="size-[22px]">
          <path d="M12 3h10v16H12z" fill="#fff" stroke="#217346" />
          <path d="M14 6h2.500M14 8.500h2.500M14 11h2.500M14 13.500h2.500M14 16h2.500M17.500 6H20M17.500 8.500H20M17.500 11H20M17.500 13.500H20M17.500 16H20" stroke="#217346" strokeWidth="1.400" />
          <path d="M0 2.500L13 0v22L0 19.500z" fill="#217346" />
          <path d="M4 7.500l5 7.500M9 7.500L4 15" stroke="#fff" strokeWidth="1.800" />
        </svg>
      </Task>
      <Task label="Zalo" state="open">
        <span className="flex size-6 items-center justify-center rounded-[3px] bg-[#0a8fe8]">
          <span className="flex h-5 w-[22px] items-center justify-center rounded-full bg-white text-[8px] font-bold text-[#0a7fd8]">
            Zalo
          </span>
        </span>
      </Task>
      <Task label="UniKey" state="open">
        <span className="flex w-[23px] flex-wrap justify-center gap-x-px text-[8px] leading-[9px] font-bold text-[#e02020]">
          <span className="w-[11px] rounded-[1px] bg-[#ececec]">u</span>
          <span className="w-[11px] rounded-[1px] bg-[#ececec]">i</span>
          <span className="w-[11px] rounded-[1px] bg-[#ececec]">n</span>
        </span>
      </Task>
      <Task label="Remote Desktop" state="open">
        <svg viewBox="0 0 24 24" className="size-6">
          <circle cx="12" cy="12" r="12" fill="#2a78d0" />
          <rect x="6" y="6.500" width="12" height="9" fill="#2a78d0" stroke="#fff" strokeWidth="1.400" />
          <path d="M6.500 15L17 7v8z" fill="#fff" />
          <path d="M9 18h6" stroke="#fff" strokeWidth="1.500" />
        </svg>
      </Task>
      <Task label="Dự toán Eta" state="active">
        <SigmaIcon className="size-6" />
      </Task>
    </div>
    <div className="ml-auto flex h-10 shrink-0 items-center text-[11px]">
      <svg viewBox="0 0 16 16" className="mr-[22px] size-4" fill="none" stroke="#fff" strokeWidth="1.200">
        <circle cx="10.500" cy="3.500" r="2.500" />
        <circle cx="4.500" cy="7.500" r="2.300" />
        <path d="M1 15c0-6 7-6 7 0M8 8.500c2-3 6-2.500 6.500 2.500" />
      </svg>
      <svg viewBox="0 0 12 7" className="mr-[9px] h-[7px] w-3" fill="none" stroke="#fff" strokeWidth="1.300">
        <path d="M.5 6.500L6 1l5.500 5.500" />
      </svg>
      <svg viewBox="0 0 16 14" className="mr-2.5 h-3.5 w-4" fill="none" stroke="#fff">
        <path d="M.5 4.500h3l3-3.500v12l-3-3.500h-3zM8.500 5c1 1 1 3 0 4M10.500 3.500c2 2 2 5 0 7" />
        <path d="M12.500 2c3 3 3 7 0 10" stroke="#777" />
      </svg>
      <svg viewBox="0 0 15 10" className="mr-2.5 h-2.5 w-[15px]" fill="none" stroke="#fff">
        <path d="M.5 1h12v8H.5zM14 3.500v3" strokeWidth="1.300" />
        <path d="M2.500 3H7v4H2.500z" fill="#fff" stroke="none" />
      </svg>
      <svg viewBox="0 0 14 14" className="mr-2 size-3.5" fill="none" stroke="#777">
        <path d="M.5 13A12.500 12.500 0 0 1 13 .8M3.500 13A9.500 9.500 0 0 1 13 4" />
        <path d="M6.500 13A6.500 6.500 0 0 1 13 7M9.500 13A3.500 3.500 0 0 1 13 10" stroke="#fff" />
        <circle cx="12.500" cy="12.500" r="1.300" fill="#fff" stroke="none" />
      </svg>
      <svg viewBox="0 0 16 12" className="mr-2.5 h-3 w-4">
        <path d="M4 12a4 4 0 0 1-.5-7.500A5 5 0 0 1 12.500 4 4 4 0 0 1 12 12z" fill="#fff" />
        <path d="M8 4l3 3H9v3H7V7H5z" fill="#04070f" />
      </svg>
      <span>ENG</span>
      <span className="ml-2 w-16 text-center leading-[18px]">
        8:53 AM
        <br />
        7/5/2018
      </span>
      <button aria-label="Thông báo hệ thống" className="relative mr-5 ml-3 flex">
        <svg viewBox="0 0 16 16" className="size-4">
          <path d="M0 0h16v12H8l-4 4v-4H0z" fill="#fff" />
          <path d="M3 3.500h10M3 6h10M3 8.500h6" stroke="#04070f" />
        </svg>
        <span className="absolute top-2 left-2 size-4 rounded-full border border-[#888] bg-[#333] text-[10px] leading-[14px]">
          2
        </span>
      </button>
      <div className="mr-1 h-10 w-px bg-[#555]" />
    </div>
  </nav>
);

const App = () => {
  return (
    <div className="relative flex h-screen min-h-[700px] flex-col overflow-hidden bg-[#ece9d8] font-['Roboto',sans-serif] text-[11px] leading-4 text-black">
      <TitleBar />
      <div className="flex h-6 shrink-0 items-center gap-px pt-px pl-1.5">
        {menus.map((label) => (
          <button key={label} className="shrink-0 px-2 whitespace-nowrap">
            {label}
          </button>
        ))}
      </div>
      <Toolbar />
      <div className="flex min-h-0 flex-1 gap-[5px] pt-px">
        <Sidebar />
        <Workspace />
      </div>
      <StatusBar />
      <Taskbar />

      <DownloadDialog />
      <StepNotes />
      <div className="pointer-events-none absolute right-[61px] bottom-20 w-[236px] font-['Open_Sans',sans-serif] whitespace-nowrap text-[#b4b4b4]">
        <p className="text-[19px] leading-6">Activate Windows</p>
        <p className="text-[14px] leading-5">Go to Settings to activate Windows.</p>
      </div>
    </div>
  );
};

export default App;
